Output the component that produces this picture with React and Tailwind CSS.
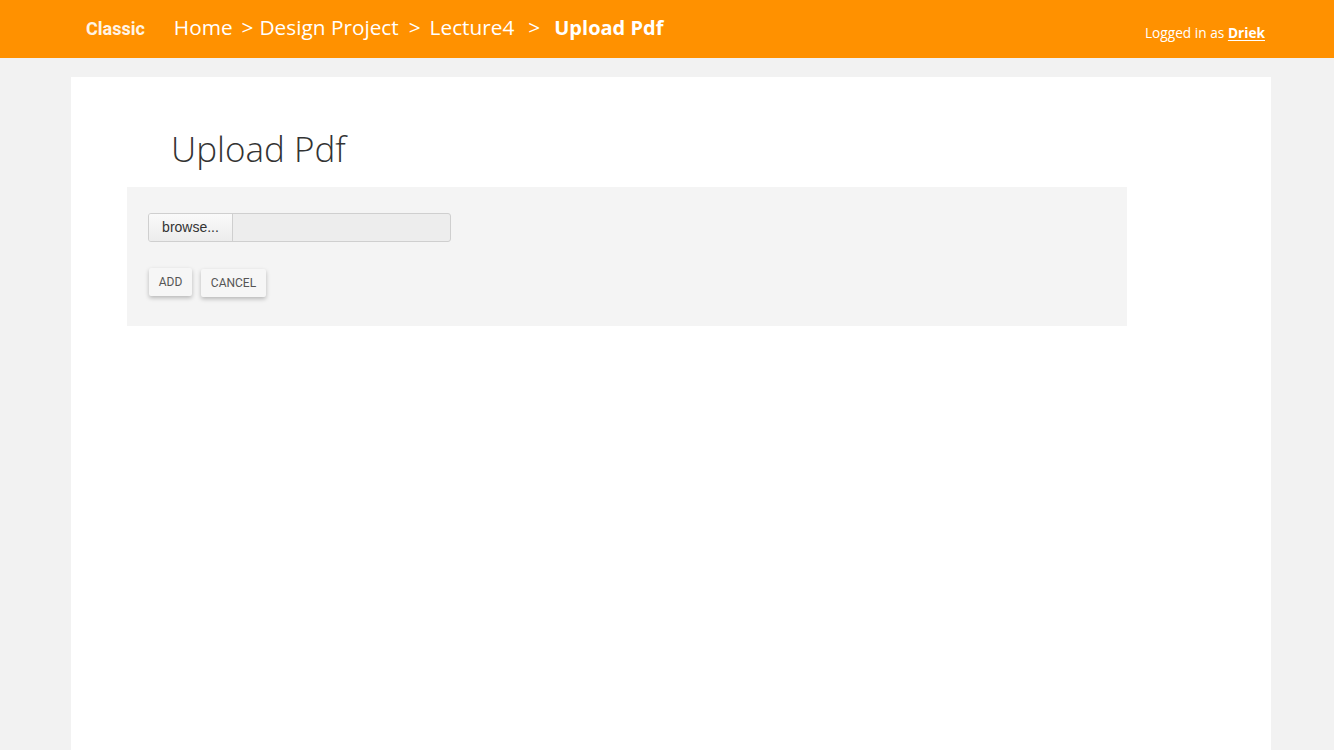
import React from "react";

const App = () => {
  return (
    <div className="min-h-[750px] bg-[#f2f2f2] font-['Open_Sans',sans-serif]">
      {/* Top bar */}
      <header className="h-[58px] bg-[#ff9100] flex items-start justify-between pl-[86px] pr-[69px] text-white">
        <div className="flex items-baseline pt-[13px]">
          <span className="font-['Roboto',sans-serif] font-bold text-[18px] opacity-90 mr-[29px]">Classic</span>
          <nav className="flex items-baseline text-[20.8px] leading-[28px]">
            <span>Home</span>
            <span className="ml-[9px] mr-[6px]">&gt;</span>
            <span>Design Project</span>
            <span className="ml-[10px] mr-[9px]">&gt;</span>
            <span>Lecture4</span>
            <span className="ml-[14px] mr-[14px]">&gt;</span>
            <span className="font-bold text-[20px]">Upload Pdf</span>
          </nav>
        </div>
        <div className="pt-[23px] text-[13.7px]">
          Logged in as <a className="font-bold underline underline-offset-2">Driek</a>
        </div>
      </header>

      {/* Card */}
      <main className="ml-[71px] mt-[19px] w-[1200px] min-h-[673px] bg-white pt-[46px] pl-[56px]">
        <h1 className="pl-[44px] font-light text-[35px] leading-[52px] text-[#333]">Upload Pdf</h1>
        <section className="mt-[12px] w-[1000px] h-[139px] bg-[#f4f4f4] pt-[26px] pl-[21px]">
          <div className="flex w-[303px] h-[29px] rounded-[3px] border border-[#cfcfcf] bg-[#ededed] overflow-hidden">
            <button className="w-[84px] border-r border-[#cfcfcf] bg-gradient-to-b from-[#fafafa] to-[#ececec] text-[14px] text-[#333] font-['Liberation_Sans',sans-serif]">
              browse...
            </button>
            <div className="flex-1" />
          </div>
          <div className="flex items-start gap-[9px] mt-[26px] pl-[1px] font-['Roboto',sans-serif]">
            <button className="h-[28px] w-[43px] bg-[#f6f6f6] text-[12px] text-[#555] rounded-[2px] shadow-[0_2px_4px_rgba(0,0,0,0.25)]">
              ADD
            </button>
            <button className="mt-[1px] h-[28px] w-[65px] bg-[#f6f6f6] text-[12px] text-[#555] rounded-[2px] shadow-[0_2px_4px_rgba(0,0,0,0.25)]">
              CANCEL
            </button>
          </div>
        </section>
      </main>
    </div>
  );
};

export default App;
